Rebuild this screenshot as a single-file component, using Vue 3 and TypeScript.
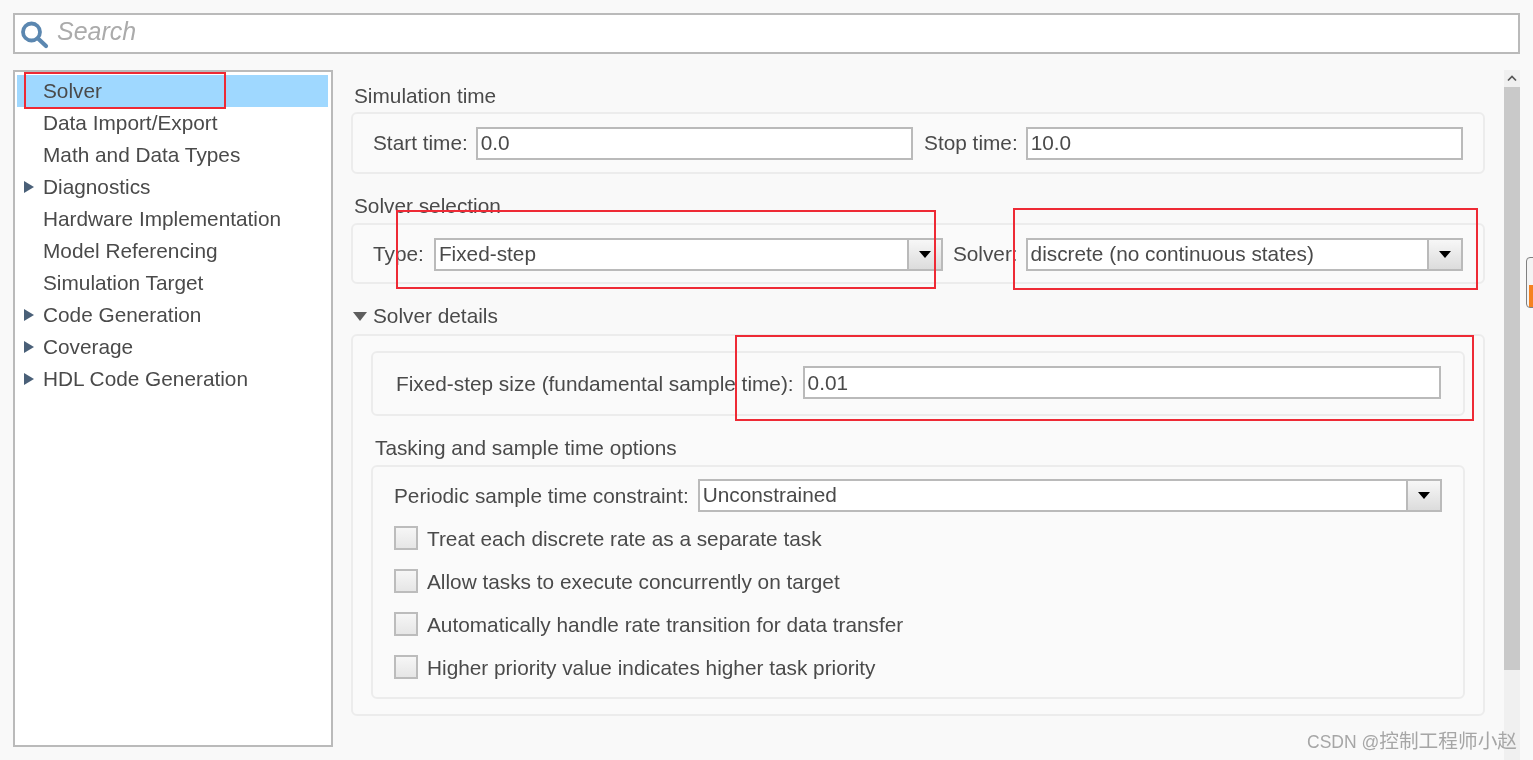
<script setup lang="ts">
interface TreeItem { label: string; expandable: boolean; selected?: boolean }
const tree: TreeItem[] = [
  { label: 'Solver', expandable: false, selected: true },
  { label: 'Data Import/Export', expandable: false },
  { label: 'Math and Data Types', expandable: false },
  { label: 'Diagnostics', expandable: true },
  { label: 'Hardware Implementation', expandable: false },
  { label: 'Model Referencing', expandable: false },
  { label: 'Simulation Target', expandable: false },
  { label: 'Code Generation', expandable: true },
  { label: 'Coverage', expandable: true },
  { label: 'HDL Code Generation', expandable: true },
]
const options: string[] = [
  'Treat each discrete rate as a separate task',
  'Allow tasks to execute concurrently on target',
  'Automatically handle rate transition for data transfer',
  'Higher priority value indicates higher task priority',
]
</script>

<template>
  <div class="page">
    <div class="search">
      <svg class="search-icon" width="30" height="32" viewBox="0 0 30 32">
        <circle cx="10.5" cy="13" r="8.5" fill="none" stroke="#5b87b0" stroke-width="3.8" />
        <path d="M17 19.5 L25 27" stroke="#5b87b0" stroke-width="4.2" stroke-linecap="round" />
      </svg>
      <span class="search-text">Search</span>
    </div>

    <div class="content">
      <nav class="tree">
        <div v-for="item in tree" :key="item.label" class="tree-row" :class="{ selected: item.selected }">
          <span class="tree-arrow" :class="{ visible: item.expandable }"></span>
          <span>{{ item.label }}</span>
        </div>
      </nav>

      <main class="main">
        <div class="title first">Simulation time</div>
        <section class="box box-a">
          <label class="field-label">Start time:</label>
          <div class="input grow">0.0</div>
          <label class="field-label stop">Stop time:</label>
          <div class="input grow">10.0</div>
        </section>

        <div class="title second">Solver selection</div>
        <section class="box box-b">
          <label class="field-label">Type:</label>
          <div class="select type-select">
            <span class="select-value">Fixed-step</span>
            <span class="select-btn"><i></i></span>
          </div>
          <label class="field-label solver-label">Solver:</label>
          <div class="select solver-select">
            <span class="select-value">discrete (no continuous states)</span>
            <span class="select-btn"><i></i></span>
          </div>
        </section>

        <div class="title third"><span class="down-arrow"></span>Solver details</div>
        <section class="box box-c">
          <div class="inner step-box">
            <label class="field-label">Fixed-step size (fundamental sample time):</label>
            <div class="input grow step-input">0.01</div>
          </div>
          <div class="tasking-title">Tasking and sample time options</div>
          <div class="inner tasking-box">
            <div class="periodic">
              <label class="field-label">Periodic sample time constraint:</label>
              <div class="select periodic-select">
                <span class="select-value">Unconstrained</span>
                <span class="select-btn"><i></i></span>
              </div>
            </div>
            <div v-for="o in options" :key="o" class="check-row">
              <span class="check"></span>
              <span>{{ o }}</span>
            </div>
          </div>
        </section>
      </main>

      <div class="scrollbar">
        <div class="sb-up">
          <svg width="10" height="7" viewBox="0 0 10 7"><path d="M1 5.5 L5 1.5 L9 5.5" fill="none" stroke="#555" stroke-width="1.7" /></svg>
        </div>
        <div class="sb-thumb"></div>
        <div class="sb-track"></div>
      </div>
    </div>

    <div class="side-widget"><span></span></div>

    <div class="mark mark-solver"></div>
    <div class="mark mark-type"></div>
    <div class="mark mark-solver-sel"></div>
    <div class="mark mark-step"></div>
    <div class="watermark">CSDN @<span class="wm-cjk">控制工程师小赵</span></div>
  </div>
</template>

<style>
html, body { margin: 0; background: #f9f9f9; overflow: hidden; }
</style>

<style scoped>
.page {
  position: relative;
  width: 1533px;
  height: 760px;
  overflow: hidden;
  box-sizing: border-box;
  padding: 13px 13px 0;
  background: #f9f9f9;
  color: #4a4a4a;
  font-family: "Liberation Sans", Arial, sans-serif;
  font-size: 20.8px;
  filter: blur(0.3px);
}
.search {
  box-sizing: border-box;
  width: 1507px;
  height: 41px;
  border: 2px solid #bababa;
  background: #fff;
  display: flex;
  align-items: center;
  padding-left: 6px;
}
.search-icon { flex: none; margin-top: 3px; }
.search-text { margin-left: 6px; margin-bottom: 4px; font-style: italic; font-size: 25px; color: #ababab; }

.content { display: flex; margin-top: 16px; }
.tree {
  box-sizing: border-box;
  flex: none;
  width: 320px;
  height: 677px;
  border: 2px solid #bababa;
  background: #fff;
  padding: 3px 3px 0 2px;
}
.tree-row {
  height: 32px;
  display: flex;
  align-items: center;
  padding-left: 7px;
  white-space: nowrap;
}
.tree-row.selected { background: #9fd8ff; }
.tree-arrow {
  flex: none;
  width: 19px;
  height: 12px;
}
.tree-arrow.visible {
  width: 0;
  height: 0;
  margin-right: 9px;
  border-left: 10px solid #4a6078;
  border-top: 6px solid transparent;
  border-bottom: 6px solid transparent;
}
.main { flex: none; width: 1134px; margin-left: 18px; }
.title { height: 24px; line-height: 24px; padding-left: 3px; white-space: nowrap; }
.title.first { margin-top: 14px; margin-bottom: 4px; }
.title.second { margin-top: 20px; margin-bottom: 5px; }
.title.third { margin-top: 20px; margin-bottom: 6px; display: flex; align-items: center; }
.box {
  box-sizing: border-box;
  border: 2px solid #ececec;
  border-radius: 6px;
  background: #fafafa;
}
.box-a, .box-b {
  display: flex;
  align-items: center;
  padding: 0 20px;
  height: 62px;
  white-space: nowrap;
}
.box-b { height: 61px; padding-top: 2px; }
.box-b .field-label { margin-top: -2px; }
.field-label { flex: none; white-space: nowrap; }
.input {
  box-sizing: border-box;
  height: 33px;
  line-height: 28px;
  padding-left: 3px;
  background: #fff;
  border: 2px solid #bababa;
  white-space: nowrap;
}
.grow { flex: 1 1 0; min-width: 0; }
.box-a .input { margin-left: 8px; }
.box-a .stop { margin-left: 11px; }

.select {
  box-sizing: border-box;
  display: flex;
  height: 33px;
  background: #fff;
  border: 2px solid #bababa;
  flex: none;
}
.select-value { flex: 1; line-height: 28px; padding-left: 3px; white-space: nowrap; }
.select-btn {
  flex: none;
  width: 32px;
  border-left: 2px solid #bababa;
  background: linear-gradient(#f7f7f7, #dcdcdc);
  display: flex;
  align-items: center;
  justify-content: center;
}
.select-btn i {
  width: 0;
  height: 0;
  border-top: 7px solid #000;
  border-left: 6.5px solid transparent;
  border-right: 6.5px solid transparent;
}
.type-select { width: 509px; margin-left: 10px; }
.solver-label { margin-left: 10px; }
.solver-select { width: 437px; margin-left: 8px; }

.down-arrow {
  flex: none;
  width: 0;
  height: 0;
  margin-left: -1px;
  margin-right: 6px;
  border-top: 9px solid #5e5e5e;
  border-left: 7px solid transparent;
  border-right: 7px solid transparent;
}
.box-c { height: 382px; padding: 15px 18px 0; }
.inner { box-sizing: border-box; width: 1094px; border: 2px solid #ececec; border-radius: 6px; }
.step-box {
  height: 65px;
  display: flex;
  align-items: center;
  padding: 0 22px 0 23px;
}
.step-input { margin-left: 9px; margin-top: -2px; line-height: 30px; }
.tasking-title { height: 49px; line-height: 24px; padding: 20px 0 0 4px; box-sizing: border-box; white-space: nowrap; }
.tasking-box { height: 234px; padding: 12px 21px 0; }
.periodic { display: flex; align-items: center; height: 33px; }
.periodic-select { width: 744px; margin-left: 9px; }
.check-row { display: flex; align-items: center; height: 43px; white-space: nowrap; }
.periodic + .check-row { margin-top: 5px; }
.check {
  flex: none;
  box-sizing: border-box;
  width: 24px;
  height: 24px;
  margin-right: 9px;
  margin-top: -1px;
  border: 2px solid #bcbcbc;
  background: linear-gradient(#f6f6f6, #e6e6e6);
}

.scrollbar {
  flex: none;
  width: 16px;
  height: 690px;
  margin-left: 19px;
  display: flex;
  flex-direction: column;
}
.sb-up { height: 17px; background: #f0f0f0; display: flex; align-items: center; justify-content: center; }
.sb-thumb { height: 583px; background: #c9c9c9; }
.sb-track { flex: 1; background: #f0f0f0; }

.side-widget {
  position: absolute;
  left: 1526px;
  top: 257px;
  box-sizing: border-box;
  width: 12px;
  height: 51px;
  border: 1.5px solid #808080;
  border-radius: 4px;
  background: #f4f4f4;
}
.side-widget span { position: absolute; left: 2px; right: 0; bottom: 0; height: 22px; background: #f58220; }

.mark { position: absolute; box-sizing: border-box; border: 2px solid #ee2a35; pointer-events: none; }
.mark-solver { left: 24px; top: 72px; width: 202px; height: 37px; }
.mark-type { left: 396px; top: 210px; width: 540px; height: 79px; }
.mark-solver-sel { left: 1013px; top: 208px; width: 465px; height: 82px; }
.mark-step { left: 735px; top: 335px; width: 739px; height: 86px; }

.watermark {
  position: absolute;
  left: 1307px;
  top: 729px;
  font-size: 17.5px;
  line-height: 24px;
  color: #a6a6a6;
  white-space: nowrap;
  font-family: "Liberation Sans", "Noto Sans CJK SC", sans-serif;
}
.wm-cjk { font-size: 19.7px; }
</style>
